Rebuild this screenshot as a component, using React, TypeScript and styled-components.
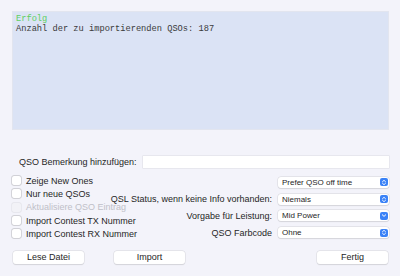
import React from 'react';
import styled, { createGlobalStyle } from 'styled-components';

const GlobalStyle = createGlobalStyle`
  html, body {
    margin: 0;
    padding: 0;
    background: #f3f3fa;
  }
  body {
    font-family: "Liberation Sans", Arial, sans-serif;
    color: #262626;
  }
`;

const Window = styled.div`
  width: 400px;
  height: 276px;
  box-sizing: border-box;
  padding-top: 11px;
  display: flex;
  flex-direction: column;
  overflow: hidden;
`;

const LogArea = styled.div`
  margin: 0 11px 0 12px;
  height: 119px;
  box-sizing: border-box;
  background: #dbe3f5;
  border: 1px solid #e2e5ef;
  padding: 2px 3px;
  font-family: "Liberation Mono", "Courier New", monospace;
  font-size: 8.7px;
  line-height: 10px;
  color: #3a3a3a;
`;

const LogLine = styled.div<{ $ok?: boolean }>`
  color: ${p => (p.$ok ? '#5fcf62' : '#3a3a3a')};
  white-space: pre;
`;

const RemarkRow = styled.div`
  margin-top: 26px;
  display: flex;
  align-items: center;
  padding: 0 11px 0 19px;
  gap: 6px;
  font-size: 9px;
`;

const Input = styled.div`
  flex: 1;
  height: 12px;
  background: #ffffff;
  box-shadow: 0 0 0 0.5px #dcdce2;
`;

const Options = styled.div`
  margin-top: 6px;
  display: grid;
  font-size: 9px;
`;

const CheckColumn = styled.div`
  grid-area: 1 / 1;
  justify-self: start;
  padding-left: 12px;
  display: flex;
  flex-direction: column;
`;

const CheckRow = styled.label<{ $disabled?: boolean }>`
  height: 13.3px;
  display: flex;
  align-items: center;
  gap: 5px;
  color: ${p => (p.$disabled ? '#bfc0c8' : '#262626')};
  white-space: nowrap;
`;

const Box = styled.span<{ $disabled?: boolean }>`
  width: 9px;
  height: 9px;
  border-radius: 2px;
  background: ${p => (p.$disabled ? '#f2f2f7' : '#ffffff')};
  box-shadow: 0 0 0 0.7px ${p => (p.$disabled ? '#e3e3ea' : '#c6c6cc')};
`;

const SelectColumn = styled.div`
  grid-area: 1 / 1;
  justify-self: end;
  padding-right: 11px;
  display: flex;
  flex-direction: column;
`;

const SelectRow = styled.div`
  height: 16.8px;
  display: flex;
  align-items: center;
  justify-content: flex-end;
  gap: 6px;
  white-space: nowrap;
`;

const Select = styled.div`
  width: 111px;
  height: 11px;
  box-sizing: border-box;
  background: #ffffff;
  border-radius: 3px;
  box-shadow: 0 0 0 0.5px #d6d6dc, 0 0.5px 1px rgba(0, 0, 0, 0.12);
  display: flex;
  align-items: center;
  justify-content: space-between;
  padding: 0 1.5px 0 4px;
  font-size: 8px;
`;

const Stepper = styled.span`
  width: 8px;
  height: 8px;
  border-radius: 2px;
  background: #3a82f7;
  display: flex;
  align-items: center;
  justify-content: center;
`;

const ButtonRow = styled.div`
  margin-top: 9.5px;
  display: flex;
  padding: 0 12px 0 13px;
  gap: 30px;
`;

const Button = styled.div<{ $right?: boolean }>`
  width: 71px;
  height: 13px;
  margin-left: ${p => (p.$right ? 'auto' : '0')};
  background: #ffffff;
  border-radius: 3px;
  box-shadow: 0 0 0 0.5px #d8d8de, 0 0.5px 1px rgba(0, 0, 0, 0.14);
  display: flex;
  align-items: center;
  justify-content: center;
  font-size: 9px;
`;

function StepIcon({ single }: { single?: boolean }) {
  return (
    <Stepper>
      <svg width="6" height="7" viewBox="0 0 6 7">
        {single ? (
          <path d="M1.3 2.8 L3 4.4 L4.7 2.8" stroke="#fff" strokeWidth="1" fill="none" strokeLinecap="round" strokeLinejoin="round" />
        ) : (
          <>
            <path d="M1.5 2.7 L3 1.3 L4.5 2.7" stroke="#fff" strokeWidth="0.9" fill="none" strokeLinecap="round" strokeLinejoin="round" />
            <path d="M1.5 4.3 L3 5.7 L4.5 4.3" stroke="#fff" strokeWidth="0.9" fill="none" strokeLinecap="round" strokeLinejoin="round" />
          </>
        )}
      </svg>
    </Stepper>
  );
}

const checks = [
  { label: 'Zeige New Ones' },
  { label: 'Nur neue QSOs' },
  { label: 'Aktualisiere QSO Eintrag', disabled: true },
  { label: 'Import Contest TX Nummer' },
  { label: 'Import Contest RX Nummer' },
];

const selects = [
  { label: '', value: 'Prefer QSO off time' },
  { label: 'QSL Status, wenn keine Info vorhanden:', value: 'Niemals' },
  { label: 'Vorgabe für Leistung:', value: 'Mid Power', single: true },
  { label: 'QSO Farbcode', value: 'Ohne' },
];

export default function App() {
  return (
    <>
      <GlobalStyle />
      <Window>
        <LogArea>
          <LogLine $ok>Erfolg</LogLine>
          <LogLine>Anzahl der zu importierenden QSOs: 187</LogLine>
        </LogArea>

        <RemarkRow>
          <span>QSO Bemerkung hinzufügen:</span>
          <Input />
        </RemarkRow>

        <Options>
          <CheckColumn>
            {checks.map(c => (
              <CheckRow key={c.label} $disabled={c.disabled}>
                <Box $disabled={c.disabled} />
                {c.label}
              </CheckRow>
            ))}
          </CheckColumn>
          <SelectColumn>
            {selects.map(s => (
              <SelectRow key={s.value}>
                {s.label && <span>{s.label}</span>}
                <Select>
                  <span>{s.value}</span>
                  <StepIcon single={s.single} />
                </Select>
              </SelectRow>
            ))}
          </SelectColumn>
        </Options>

        <ButtonRow>
          <Button>Lese Datei</Button>
          <Button>Import</Button>
          <Button $right>Fertig</Button>
        </ButtonRow>
      </Window>
    </>
  );
}
